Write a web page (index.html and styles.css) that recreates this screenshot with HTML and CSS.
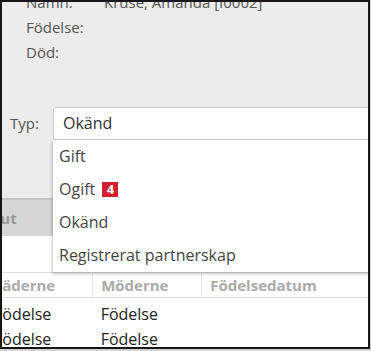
FILE: index.html
```html
<!DOCTYPE html>
<html lang="sv">
<head>
<meta charset="utf-8">
<link rel="stylesheet" href="styles.css">
</head>
<body>
<div class="frame">
  <div class="panel">
    <div class="info">
      <div class="info-row"><span class="info-label">Namn:</span><span class="info-value">Kruse, Amanda [I0002]</span></div>
      <div class="info-row"><span class="info-label">Födelse:</span></div>
      <div class="info-row"><span class="info-label">Död:</span></div>
    </div>
    <div class="typ-row">
      <span class="typ-label">Typ:</span>
      <div class="select-wrap">
        <div class="select">Okänd</div>
        <ul class="dropdown">
          <li>Gift</li>
          <li>Ogift <span class="badge">4</span></li>
          <li>Okänd</li>
          <li>Registrerat partnerskap</li>
        </ul>
      </div>
    </div>
  </div>
  <div class="tabbar"><span class="tab">Layout</span></div>
  <div class="content">
    <table class="grid">
      <thead>
        <tr><th class="c1">Fäderne</th><th class="c2">Möderne</th><th class="c3">Födelsedatum</th></tr>
      </thead>
      <tbody>
        <tr><td>Födelse</td><td>Födelse</td><td></td></tr>
        <tr><td>Födelse</td><td>Födelse</td><td></td></tr>
      </tbody>
    </table>
  </div>
</div>
</body>
</html>
```
FILE: styles.css
```css
html, body {
  margin: 0;
  padding: 0;
  background: #d2d2d2;
}
body {
  font-family: "Open Sans", "DejaVu Sans", sans-serif;
  width: 371px;
  height: 351px;
  overflow: hidden;
}
.frame {
  width: 366px;
  height: 345px;
  border: 2px solid #161616;
  background: #ffffff;
  overflow: hidden;
  position: relative;
}
.panel {
  display: flow-root;
  background: #ececec;
  height: 196px;
}
.info {
  margin-top: -12px;
  padding-left: 24px;
  color: #555;
  font-size: 15px;
}
.info-row {
  height: 25px;
  line-height: 25px;
  display: flex;
}
.info-label {
  width: 78px;
}
.info-value {
  color: #555;
}
.typ-row {
  margin-top: 42px;
  display: flex;
  align-items: flex-start;
}
.typ-label {
  width: 43px;
  padding-left: 8px;
  color: #555;
  font-size: 15px;
  line-height: 33px;
}
.select-wrap {
  position: relative;
  flex: 1;
  margin-right: -20px;
}
.select {
  height: 31px;
  line-height: 31px;
  border: 1px solid #c9c9c9;
  border-radius: 3px 0 0 0;
  background: #fff;
  padding-left: 9px;
  font-size: 16px;
  color: #333;
}
.dropdown {
  position: absolute;
  top: 33px;
  left: 0;
  right: 0;
  margin: 0;
  padding: 0;
  list-style: none;
  background: #fff;
  box-shadow: -1px 2px 3px rgba(0, 0, 0, 0.22);
  z-index: 5;
}
.dropdown li {
  height: 33px;
  line-height: 33px;
  padding-left: 6px;
  font-size: 16px;
  color: #444;
}
.badge {
  display: inline-block;
  background: #d21f2f;
  color: #fff;
  font-weight: bold;
  font-size: 13px;
  line-height: 15px;
  width: 16px;
  text-align: center;
  vertical-align: 1px;
  margin-left: 3px;
}
.tabbar {
  height: 36px;
  background: #d6d6d6;
  border-top: 2px solid #c4c4c4;
  display: flex;
  align-items: center;
  overflow: hidden;
}
.tab {
  margin-left: -37px;
  font-weight: bold;
  color: #9a9a9a;
  font-size: 15px;
}
.content {
  padding-top: 36px;
  overflow: hidden;
}
.grid {
  margin-left: -16px;
  border-collapse: collapse;
}
.grid th {
  text-align: left;
  font-weight: bold;
  font-size: 15px;
  color: #aaa;
  height: 24px;
  padding: 0 8px;
  border-top: 1px solid #ddd;
  border-bottom: 1px solid #ddd;
  border-right: 1px solid #e6e6e6;
}
.grid th.c1 { width: 97px; }
.grid th.c2 { width: 98px; }
.grid th.c3 { width: 160px; border-right: none; }
.grid td {
  height: 25px;
  padding: 0 8px;
  font-size: 16px;
  color: #222;
}
.grid tbody tr:first-child td {
  padding-top: 3px;
}
```
